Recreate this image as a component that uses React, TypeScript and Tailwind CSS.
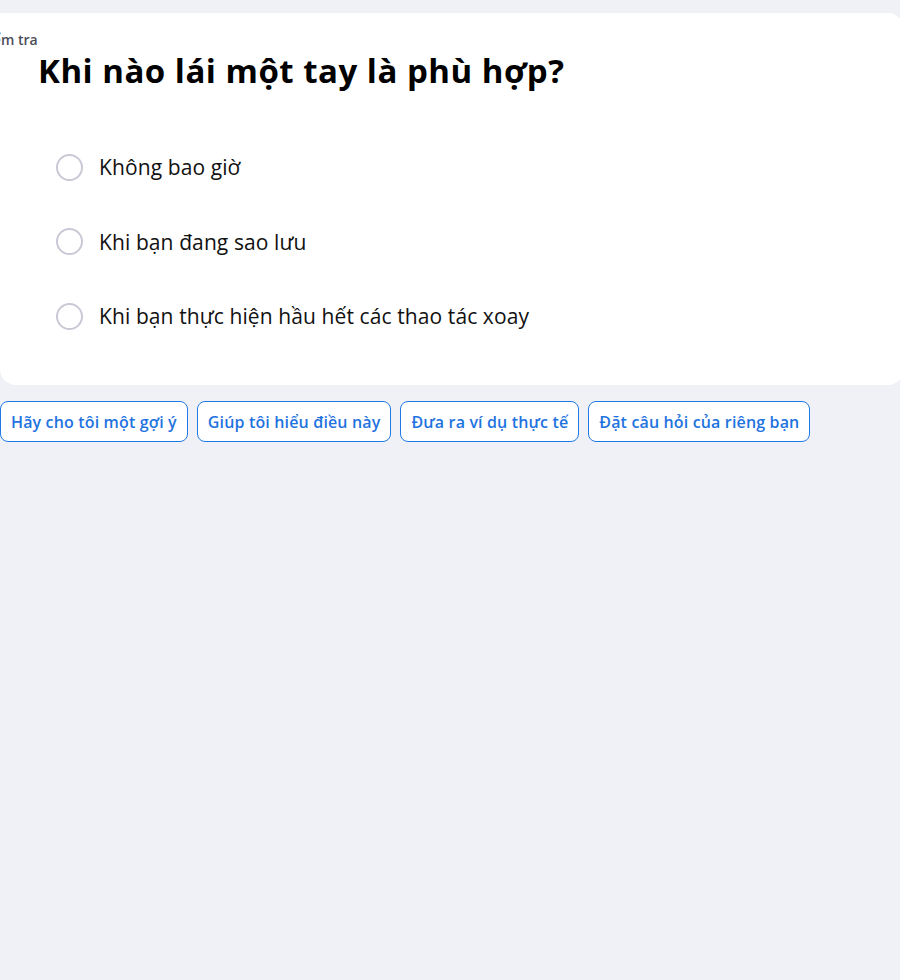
import React from "react";

const options = [
  "Không bao giờ",
  "Khi bạn đang sao lưu",
  "Khi bạn thực hiện hầu hết các thao tác xoay",
];

const chips = [
  "Hãy cho tôi một gợi ý",
  "Giúp tôi hiểu điều này",
  "Đưa ra ví dụ thực tế",
  "Đặt câu hỏi của riêng bạn",
];

export default function App() {
  return (
    <div
      className="w-[900px] h-[980px] overflow-hidden bg-[#f0f1f6] pt-[13px]"
      style={{ fontFamily: "'Open Sans', 'Noto Sans', sans-serif" }}
    >
      <div className="w-[904px] bg-white rounded-2xl rounded-tl-none h-[372px] pt-[18px]">
        <div className="ml-[-20px] text-[14px] font-semibold text-[#4b4b57] leading-[18px]">Kiểm tra</div>
        <h1 className="ml-[38px] mt-[2px] text-[33px] tracking-[0.5px] font-bold text-black leading-[40px]">
          Khi nào lái một tay là phù hợp?
        </h1>
        <div className="ml-[56px] mt-[62px] flex flex-col gap-[46.5px]">
          {options.map((o) => (
            <div key={o} className="flex items-center gap-[16px] h-[28px]">
              <div className="w-[27px] h-[27px] rounded-full border-2 border-[#c9c9d6] bg-white" />
              <span className="text-[21px] tracking-[0.1px] text-[#111] leading-[28px]">{o}</span>
            </div>
          ))}
        </div>
      </div>
      <div className="mt-[16px] flex gap-[9px]">
        {chips.map((c) => (
          <button
            key={c}
            className="h-[41px] px-[10px] rounded-lg border border-[#1f7ae8] bg-white text-[#1f73e0] text-[16px] tracking-[0.15px] font-semibold"
          >
            {c}
          </button>
        ))}
      </div>
    </div>
  );
}
